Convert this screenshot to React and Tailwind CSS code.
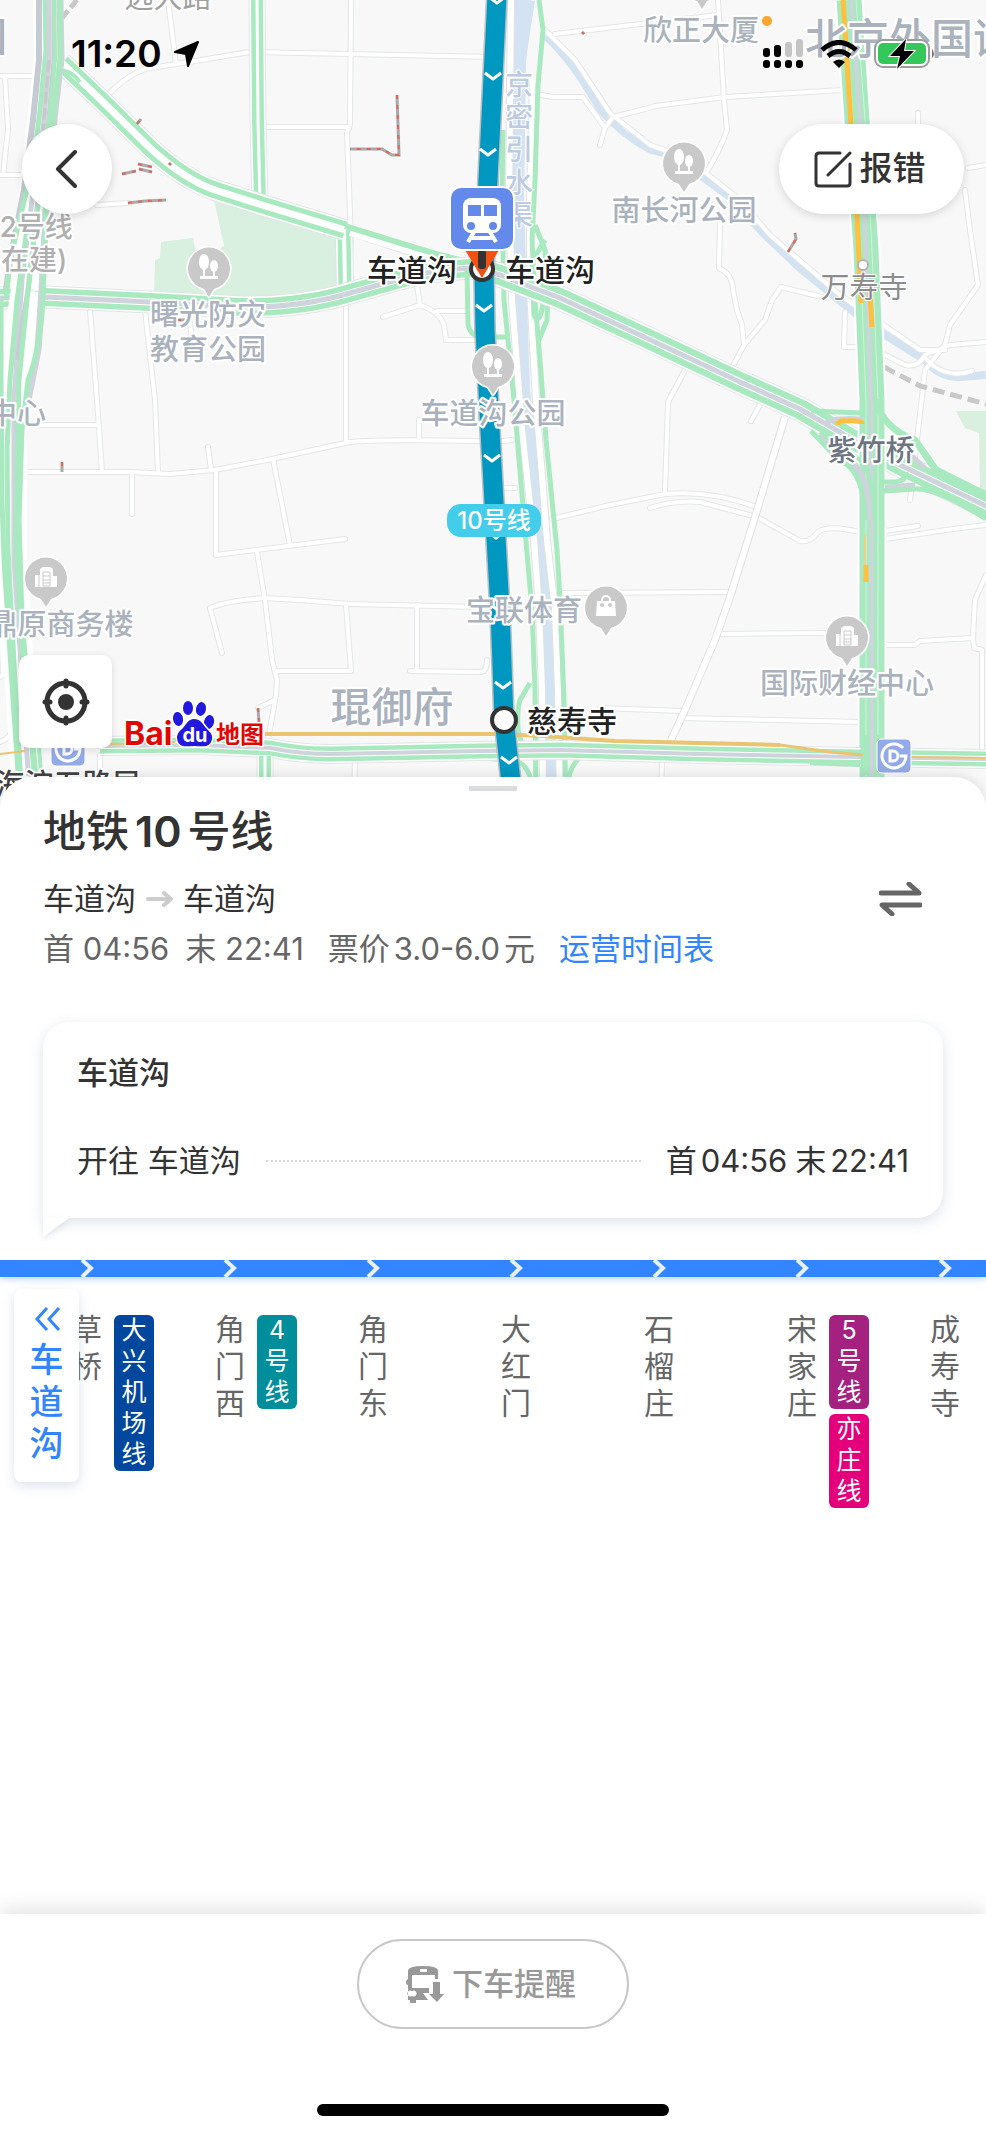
const minorRoads = [
  "M0,76 L37,76",
  "M5,76 L8,130 L3,175",
  "M0,175 L22,175",
  "M168,0 L176,64",
  "M107,96 Q125,76 145,69 L250,52 L493,57",
  "M351,0 L350,125 L347,133 L351,240 L346,300 L346,442",
  "M265,127 L349,127",
  "M97,205 L130,203",
  "M90,310 L97,400 L102,472",
  "M145,310 L155,400 L158,472",
  "M189,318 L193,345",
  "M383,317 L420,305 Q440,312 444,325 L446,340 L482,340",
  "M437,311 L465,311",
  "M417,285 L420,305",
  "M40,425 L99,425",
  "M24,472 L130,472 L170,474 L215,470 L272,459 L350,442 Q375,439 480,441",
  "M132,472 L132,514",
  "M208,447 L211,470",
  "M216,470 L216,555 L345,539",
  "M273,459 L290,545",
  "M419,420 L419,440",
  "M257,552 L265,600 L272,660 L277,680 L276,695 L265,757",
  "M258,708 L275,700",
  "M222,653 L210,608 Q225,601 264,598 L300,600 L350,604 L480,607",
  "M346,605 L351,671 L277,671",
  "M417,605 L417,671",
  "M410,671 L480,672 Q487,672 487,660",
  "M354,800 L355,760 L480,757",
  "M100,800 L100,755",
  "M0,742 Q10,738 12,730",
  "M2,640 L3,675 L0,677",
  "M555,34 L718,15",
  "M718,0 L724,100 L727,130 Q720,150 706,173",
  "M541,95 L553,97 L583,97 L605,128 L613,117 L645,109 L655,106 L725,97 L843,90",
  "M605,128 L600,145",
  "M545,30 L575,60 L610,113 L650,145 L670,152",
  "M706,173 L740,200 L770,235 L840,295 L920,350 L945,350",
  "M720,222 L719,268 Q733,275 733,290 L737,310 L742,325 L744,345 L731,370",
  "M744,345 L765,320 L772,300 L781,287 L822,297",
  "M845,312 L844,347 L870,347 L905,365 Q918,368 925,355 L950,345 L986,342",
  "M925,358 Q945,380 972,371",
  "M965,190 L970,230 L978,285 L950,325 L945,345 L925,370 L910,500",
  "M968,168 L986,165",
  "M918,113 L918,140",
  "M685,370 L668,402 L665,492",
  "M552,519 L610,505 L665,494 Q710,490 757,507",
  "M650,508 Q675,500 700,502 L757,517 L800,541 Q810,543 818,532 Q830,524 863,533",
  "M751,421 L760,405",
  "M563,593 L733,592",
  "M718,634 L830,633",
  "M600,708 L683,711",
  "M680,718 L860,722",
  "M885,539 L960,528 L986,525",
  "M885,531 L918,526",
  "M885,645 L915,645 L920,641 L973,638 L975,600 L986,575",
  "M973,638 L974,648 L982,650 L982,750",
  "M662,757 L661,800",
  "M503,441 L512,440",
  "M503,488 L515,488",
];

const wideRoads = [
  "M785,417 L755,517 L730,597 L715,640 L685,710 L671,740",
  "M511,0 L509,200 L512,300 L522,430 L534,540 L539,610 L542,690 L543,800",
  "M533,80 L530,200 L530,290 L536,400 L547,540 L555,610 L558,690 L560,800",
];

const northWest = "M62,63 L100,99 L150,148 Q185,180 215,190 L262,205 L345,230";
const westEast = "M-5,298 L45,297 L150,302 L240,307 Q300,308 350,293 L400,279 Q430,270 470,268 L482,270";
const southEast = "M482,270 L500,275 L560,298 L640,335 L740,382 L800,409 L850,438 L900,465 L990,508";
const bottomRoad = "M100,746 L200,745 L270,748 Q300,754 330,754 L480,751 L560,750 L700,754 L860,757 L990,759";

const leftLines = [
  { d: "M39,0 L39,60 L33,120 L24,190 L10,260 L6,290", color: "#c6cad3", width: 6 },
  { d: "M45,0 L46,50 L40,110 L34,160 L22,210 L10,260 L6,300", color: "#a9e9c0", width: 5 },
  { d: "M49,0 L49,60 L43,130 L32,200 L22,280 L14,400 L14,560 L30,800", color: "#cfd3db", width: 5 },
  { d: "M54,0 L54,60 L48,130 L38,200 L28,290 L17,360", color: "#c9ccd4", width: 5 },
  { d: "M54,0 L55,60 L49,120 L39,190", color: "#a9e9c0", width: 4 },
  { d: "M60,0 L61,60 L55,110 L47,190 L42,290 L38,350 L28,400", color: "#cfd3db", width: 7 },
  { d: "M60,0 L60,60 L53,120 L46,200 L43,300 Q40,350 28,380 L22,430 L19,520 L22,620 L38,800", color: "#a9e9c0", width: 5 },
  { d: "M29,215 L17,300 L10,380 L7,450 L8,550 L16,700 L22,800", color: "#a9e9c0", width: 5 },
  { d: "M38,205 L27,300 L19,380 L18,430 L16,540 L24,680 L38,800", color: "#a9e9c0", width: 5 },
  { d: "M1,300 L1,380 L2,500 L4,560 L13,700 L20,800", color: "#a9e9c0", width: 5 },
];

const congestion = [
  "M397,95 L399,155 L392,155 L382,149 L350,149",
  "M137,124 L141,119",
  "M122,174 L136,171",
  "M138,164 L152,167 M139,169 L152,172",
  "M128,203 L145,201 L166,200",
  "M177,320 L185,320",
  "M223,317 L225,322",
  "M62,462 L62,472",
  "M258,708 L259,723",
  "M582,32 L584,34",
  "M788,252 L796,239 L795,233",
  "M169,163 L171,165",
];

const chevrons = [
  [497, 0], [493, 76], [488, 152], [484, 308], [492, 458], [496, 535], [499, 608], [503, 685], [509, 760],
];

function MapLabel({ x, y, size = 29, color = "#aab2be", weight = 500, halo = 4, children }) {
  return (
    <text
      x={x}
      y={y + Math.round(size * 0.36)}
      textAnchor="middle"
      fontSize={size}
      fontWeight={weight}
      fill={color}
      stroke="#ffffff"
      strokeWidth={halo}
      strokeLinejoin="round"
      paintOrder="stroke"
    >
      {children}
    </text>
  );
}

function Pin({ x, y, type }) {
  return (
    <g transform={`translate(${x} ${y})`}>
      <path
        d="M0,29 L-5,21 A21,21 0 1 1 5,21 Z"
        fill="#c9c9c9"
        stroke="#fff"
        strokeWidth="3"
        strokeLinejoin="round"
        paintOrder="stroke"
      />
      {type === "park" && (
        <g fill="#fff">
          <ellipse cx="-5" cy="-6" rx="5" ry="8" />
          <ellipse cx="5" cy="-2" rx="4" ry="6" />
          <path d="M-6,0 h2 v8 h8 v-6 h2 v6 h3 v3 h-18 v-3 h3 z" />
        </g>
      )}
      {type === "office" && (
        <g>
          <path d="M-11,9 V-3 h5 v-6 l3,-2 h7 l3,2 v7 h4 V9 z" fill="#fff" />
          <path d="M-3,-6 h7 v14 h-7 z M-3,-2 h7 M-3,2 h7 M-3,5 h7 M-7,-3 v12" fill="none" stroke="#c9c9c9" />
        </g>
      )}
      {type === "shop" && (
        <g>
          <path d="M-4,-4 v-3 a4,4 0 0 1 8,0 v3" fill="none" stroke="#fff" strokeWidth="2" />
          <path d="M-9,-6 H9 L10,9 H-10 Z" fill="#fff" />
          <circle cx="-4" cy="-2" r="2" fill="#c9c9c9" />
          <circle cx="4" cy="-2" r="2" fill="#c9c9c9" />
        </g>
      )}
    </g>
  );
}

function MetroBadge({ x, y }) {
  return (
    <g transform={`translate(${x} ${y})`}>
      <rect x="-17" y="-17" width="34" height="34" rx="5" fill="#93aae8" stroke="#fff" strokeWidth="1" />
      <path d="M9,-8 A12,12 0 1 0 12,0 H6" fill="none" stroke="#fff" strokeWidth="3" />
      <path d="M-4,-5 h3 a5,5 0 0 1 0,10 h-3 z" fill="none" stroke="#fff" strokeWidth="3" />
    </g>
  );
}

function DoubleRoad({ d, width, inner, center = "#ffffff" }) {
  return (
    <g fill="none" strokeLinejoin="round">
      <path d={d} stroke="#e3e5e6" strokeWidth={width + 5} />
      <path d={d} stroke="#ffffff" strokeWidth={width + 3} />
      <path d={d} stroke="#a9e9c0" strokeWidth={width} />
      <path d={d} stroke="#ffffff" strokeWidth={inner} />
      <path d={d} stroke={center} strokeWidth={inner - 2} />
    </g>
  );
}

function MapCanvas() {
  return (
    <svg
      className="absolute inset-0 w-full h-full"
      viewBox="0 0 986 809"
      preserveAspectRatio="xMidYMin slice"
      role="img"
      aria-label="地图"
    >
      <rect width="986" height="809" fill="#f8f8f8" />

      {/* parks */}
      <path d="M213,195 L350,235 L346,290 L300,300 L154,298 L155,260 L160,258 L161,242 L193,238 L197,262 L224,246 Z" fill="#d9efdf" />
      <path d="M956,411 L986,411 V500 L980,490 L979,433 L965,428 Z" fill="#d9efdf" />

      {/* water */}
      <g fill="none" stroke="#d3e3f2">
        <path d="M528,0 L523,32 L519,60" strokeWidth="14" />
        <path d="M521,0 L520,60 L518,200 L521,300 L524,390 L534,460 L543,540 L547,610 L549,700 L550,809" strokeWidth="12" />
        <path d="M545,36 Q572,60 600,110 Q622,135 650,150 L670,155" strokeWidth="7" />
        <path d="M700,175 L730,197 L765,235 L800,268 L855,313 L885,335 L925,360 Q940,378 960,377 L986,375" strokeWidth="8" />
      </g>

      {/* streets */}
      <g fill="none" stroke="#e4e6e7" strokeWidth="6" strokeLinecap="round" strokeLinejoin="round">
        {minorRoads.map((d) => <path key={d} d={d} />)}
      </g>
      <g fill="none" stroke="#ffffff" strokeWidth="4" strokeLinecap="round" strokeLinejoin="round">
        {minorRoads.map((d) => <path key={d} d={d} />)}
      </g>
      <g fill="none" strokeLinejoin="round">
        {wideRoads.map((d) => <path key={d} d={d} stroke="#dfe1e3" strokeWidth="8" />)}
        {wideRoads.map((d) => <path key={d} d={d} stroke="#ffffff" strokeWidth="6" />)}
      </g>
      <path d="M77,0 L62,18" stroke="#c8c8c8" strokeWidth="5" strokeDasharray="10 4" />
      <path d="M884,367 L920,386 L986,404" fill="none" stroke="#c8c8c8" strokeWidth="5" strokeDasharray="12 6" />

      {/* arterial roads */}
      <DoubleRoad d="M257,0 L258,120 L260,203" width={12} inner={3} />
      <DoubleRoad d="M344,230 L345,290" width={13} inner={4} />
      <path d="M350,232 L440,262 L470,262" fill="none" stroke="#e3e5e6" strokeWidth="8" />
      <path d="M350,233 L440,261" fill="none" stroke="#fff" strokeWidth="6" />
      <DoubleRoad d={northWest} width={17} inner={7} />
      <path d="M345,226 L400,243 L440,255 L475,264" fill="none" stroke="#a9e9c0" strokeWidth="6" />
      <DoubleRoad d={westEast} width={18} inner={7} center="#cfd3dc" />
      <path d="M58,72 Q68,67 80,82" fill="none" stroke="#a9e9c0" strokeWidth="4" />

      <g fill="none" strokeLinejoin="round">
        <path d="M48,0 L49,60 L42,120 L34,190 L26,290" stroke="#ffffff" strokeWidth="30" />
        <path d="M26,290 L17,350 L12,400 L12,560 L28,809" stroke="#ffffff" strokeWidth="30" />
        {leftLines.map((l) => <path key={l.d} d={l.d} stroke={l.color} strokeWidth={l.width} />)}
        <path d="M49,60 L43,130" stroke="#c9c9c9" strokeWidth="3" strokeDasharray="12 4" />
        <path d="M8,320 L5,350 M33,318 L28,355" stroke="#ffffff" strokeWidth="3" />
      </g>

      {/* canal roads */}
      <g fill="none" stroke="#a9e9c0" strokeWidth="5" strokeLinejoin="round">
        <path d="M503,130 L502,200 L504,300 L514,400 L525,530 L532,610 L535,690 L536,809" />
        <path d="M539,0 L543,30 L538,85 L535,180 L532,240 L535,300 L540,360 L546,440 L557,550 L560,600 L564,700 L566,809" />
        <path d="M535,225 L545,250 L548,290 L547,320 L539,340" />
        <path d="M532,260 L534,315 Q538,325 542,310 L545,285" />
        <path d="M545,240 L534,258" />
        <path d="M467,270 L468,325 Q470,333 476,336" />
        <path d="M494,337 L508,337" />
        <path d="M530,683 L520,700 Q517,708 518,730 L522,745" />
        <path d="M480,758 L515,760 Q530,765 533,790 M580,757 Q568,768 567,790" />
      </g>
      <DoubleRoad d={southEast} width={20} inner={7} center="#cfd3dc" />

      {/* ring road */}
      <g fill="none" strokeLinejoin="round">
        <path d="M849,0 L857,120 L866,250 L872,400 L872,809" stroke="#ffffff" strokeWidth="29" />
        <path d="M849,0 L857,120 L866,250 L872,400 L872,809" stroke="#a9e9c0" strokeWidth="25" />
        <path d="M851,0 L860,120 L866,250 L871,400 L872,809" stroke="#cfd3dc" strokeWidth="4" />
        <path d="M844,0 L853,120 L860,250 L866,400 L866,809" stroke="#cdf2da" strokeWidth="1" />
        <path d="M856,0 L865,120 L872,250 L878,400 L878,809" stroke="#cdf2da" strokeWidth="1" />
        <path d="M843,0 L851,124 L857,215 L861,303" stroke="#ffbf3f" strokeWidth="5" />
        <path d="M870,294 L872,327 M866,565 L866,582" stroke="#ffbf3f" strokeWidth="5" />
        <path d="M865,535 L865,565" stroke="#f4cf85" strokeWidth="2" />
      </g>
      <g fill="none" strokeLinejoin="round">
        <path d="M820,434 L845,458 Q868,470 869,520" stroke="#cfd3dc" strokeWidth="8" />
        <path d="M811,431 L840,461 Q864,470 865,520" stroke="#a9e9c0" strokeWidth="5" />
        <path d="M820,432 L860,460 Q874,475 874,520" stroke="#a9e9c0" strokeWidth="4" />
        <path d="M811,411 L862,413" stroke="#a9e9c0" strokeWidth="5" />
        <path d="M825,424 Q832,417 862,419" stroke="#cfd3dc" strokeWidth="5" />
        <path d="M875,400 Q885,430 915,440 L936,470 L986,495" stroke="#a9e9c0" strokeWidth="7" />
        <path d="M895,440 L925,468" stroke="#cfd3dc" strokeWidth="5" />
        <path d="M885,487 L915,485" stroke="#cfd3dc" strokeWidth="5" />
        <path d="M884,482 L896,482 Q907,480 906,472 M884,491 L915,489 Q935,487 986,519" stroke="#a9e9c0" strokeWidth="5" />
        <path d="M838,425 Q838,420 846,421 Q862,420 862,424" stroke="#ffbf3f" strokeWidth="5" />
      </g>

      {/* bottom road and rail */}
      <DoubleRoad d={bottomRoad} width={15} inner={6} center="#cfd3dc" />
      <path d="M810,763 L860,765" stroke="#a9e9c0" strokeWidth="4" />
      <path d="M872,735 L872,775" stroke="#a9e9c0" strokeWidth="23" />
      <path d="M872,720 L872,809" stroke="#cfd3dc" strokeWidth="4" />
      <g fill="none" stroke="#e9c571">
        <path d="M265,734 L493,734 L543,736 L615,741 L780,745" strokeWidth="4" />
        <path d="M780,745 L830,752 L863,755" strokeWidth="3" />
        <path d="M910,757 L986,758 M0,754 L25,751 M110,744 L175,742" strokeWidth="2" />
      </g>
      <DoubleRoad d="M265,756 L265,809" width={12} inner={3} />
      <path d="M32,748 L35,809 M39,748 L41,775" stroke="#a9e9c0" strokeWidth="4" />

      {/* closed segments */}
      <g fill="none" strokeWidth="3">
        {congestion.map((d) => <path key={d} d={d} stroke="#a9a9a9" />)}
        {congestion.map((d) => <path key={d} d={d} stroke="#e0655b" strokeWidth="2" strokeDasharray="4 6" />)}
      </g>

      <g fill="#bccbe1" fontSize="28" fontWeight="500" textAnchor="middle" stroke="#ffffff" strokeWidth="2" paintOrder="stroke">
        <text x="519" y="95">京</text>
        <text x="519" y="127">密</text>
        <text x="519" y="160">引</text>
        <text x="519" y="193">水</text>
        <text x="519" y="225">渠</text>
      </g>

      {/* line 10 */}
      <g fill="none" strokeLinejoin="round">
        <path d="M497,-5 L488,180 L484,270 L485,330 L490,430 L500,610 L504,719 L514,809" stroke="#b9bfc3" strokeWidth="22" />
        <path d="M497,-5 L488,180 L484,270 L485,330 L490,430 L500,610 L504,719 L514,809" stroke="#0098c1" strokeWidth="19" />
        {chevrons.map(([x, y]) => (
          <path key={y} d={`M${x - 8},${y - 3} L${x},${y + 3} L${x + 8},${y - 3}`} stroke="#ffffff" strokeWidth="3" />
        ))}
      </g>

      <MapLabel x={168} y={-2} color="#a0a0a0" weight={400}>远大路</MapLabel>
      <MapLabel x={-13} y={37} size={40}>园</MapLabel>
      <MapLabel x={701} y={31}>欣正大厦</MapLabel>
      <MapLabel x={910} y={39} size={42}>北京外国语</MapLabel>
      <MapLabel x={684} y={211}>南长河公园</MapLabel>
      <MapLabel x={208} y={315}>曙光防灾</MapLabel>
      <MapLabel x={208} y={350}>教育公园</MapLabel>
      <MapLabel x={36} y={227} size={28} color="#b0b0b0">2号线</MapLabel>
      <MapLabel x={29} y={260} size={28} color="#b0b0b0">(在建)</MapLabel>
      <MapLabel x={493} y={414}>车道沟公园</MapLabel>
      <MapLabel x={17} y={414}>中心</MapLabel>
      <MapLabel x={61} y={625}>鼎原商务楼</MapLabel>
      <MapLabel x={524} y={611}>宝联体育</MapLabel>
      <MapLabel x={847} y={684}>国际财经中心</MapLabel>
      <MapLabel x={392} y={707} size={41}>琨御府</MapLabel>
      <MapLabel x={864} y={288} color="#8c8c8c" weight={400} halo={2}>万寿寺</MapLabel>
      <MapLabel x={871} y={451} color="#6d7583">紫竹桥</MapLabel>
      <MapLabel x={68} y={785} color="#444444">海淀五路居</MapLabel>

      <Pin x={702} y={-20} type="office" />
      <Pin x={209} y={268} type="park" />
      <Pin x={684} y={163} type="park" />
      <Pin x={493} y={366} type="park" />
      <Pin x={46} y={578} type="office" />
      <Pin x={847} y={637} type="office" />
      <Pin x={606} y={607} type="shop" />
      <MetroBadge x={68} y={749} />
      <MetroBadge x={894} y={756} />
      <circle cx="863" cy="265" r="5" fill="#fff" stroke="#b5b5b5" strokeWidth="2" />

      {/* line name */}
      <rect x="447" y="504" width="94" height="33" rx="14" fill="#43cdeb" />
      <text x="494" y="529" textAnchor="middle" fontSize="24" fontWeight="500" fill="#fff">10号线</text>

      {/* stations */}
      <circle cx="482" cy="269" r="11" fill="#fff" stroke="#333" strokeWidth="4" />
      <circle cx="504" cy="720" r="12" fill="#fff" stroke="#333" strokeWidth="4" />
      <path d="M465,250 H499 L482,278 Z" fill="#f4500f" />
      <rect x="478" y="250" width="8" height="19" rx="3" fill="#333" />
      <rect x="449" y="186" width="66" height="65" rx="13" fill="#fff" />
      <rect x="451" y="188" width="62" height="61" rx="10" fill="#6389ea" />
      <path d="M471,198 h22 a8,8 0 0 1 8,8 v19 a8,8 0 0 1 -8,8 h-22 a8,8 0 0 1 -8,-8 v-19 a8,8 0 0 1 8,-8 z" fill="#fff" />
      <path d="M468,205 h13 v11 h-13 z M484,205 h13 v11 h-13 z" fill="#6389ea" />
      <circle cx="471" cy="226" r="4" fill="#6389ea" />
      <circle cx="493" cy="226" r="4" fill="#6389ea" />
      <path d="M474,232 L468,242 M490,232 L496,242 M470,238 H494" fill="none" stroke="#fff" strokeWidth="4" />
      <MapLabel x={412} y={270} size={30} color="#222222">车道沟</MapLabel>
      <MapLabel x={550} y={270} size={30} color="#222222">车道沟</MapLabel>
      <MapLabel x={572} y={721} size={30} color="#222222">慈寿寺</MapLabel>
    </svg>
  );
}

function BaiduLogo() {
  return (
    <svg className="w-[142px] h-[50px]" viewBox="0 0 142 50" role="img" aria-label="Baidu 地图">
      <g stroke="#fff" strokeWidth="3" paintOrder="stroke" strokeLinejoin="round" fontWeight="700">
        <text x="0" y="47" fontSize="32" fill="#e10602">Bai</text>
        <g fill="#2319dc">
          <ellipse cx="54" cy="21" rx="5" ry="7" transform="rotate(-10 54 21)" />
          <ellipse cx="64" cy="10" rx="5" ry="7" />
          <ellipse cx="77" cy="11" rx="5" ry="7" transform="rotate(12 77 11)" />
          <ellipse cx="85" cy="24" rx="5" ry="7" transform="rotate(15 85 24)" />
          <path d="M70,21 C64,21 62,27 58,31 C53,35 52,39 54,44 C57,50 64,48 70,48 C77,48 84,50 87,44 C90,38 87,35 83,31 C79,27 77,21 70,21 Z" />
        </g>
        <text x="92" y="45" fontSize="24" fill="#e10602">地图</text>
      </g>
      <text x="71" y="44" textAnchor="middle" fontSize="20" fontWeight="700" fill="#fff">du</text>
    </svg>
  );
}

function StatusBar() {
  return (
    <div className="flex items-center justify-between pl-[71px] pr-[50px] pt-[32px] h-[76px] text-black">
      <div className="flex items-center gap-3">
        <span className="text-[37px] leading-[44px] font-semibold">11:20</span>
        <svg className="w-[26px] h-[26px]" viewBox="0 0 26 26" aria-hidden="true">
          <path d="M24,1 L14,25 L12,13 L1,11 Z" fill="currentColor" stroke="currentColor" strokeWidth="2" strokeLinejoin="round" />
        </svg>
      </div>
      <div className="flex items-center gap-4">
        <svg className="w-[42px] h-[30px]" viewBox="0 0 42 30" aria-hidden="true">
          <rect x="1" y="9" width="7" height="9" rx="3" />
          <rect x="12" y="6" width="7" height="12" rx="3" />
          <rect x="23" y="3" width="7" height="15" rx="3" fill="#c4c4c4" />
          <rect x="34" y="0" width="7" height="18" rx="3" fill="#c4c4c4" />
          <rect x="1" y="21" width="7" height="8" rx="3" />
          <rect x="12" y="21" width="7" height="8" rx="3" />
          <rect x="23" y="21" width="7" height="8" rx="3" />
          <rect x="34" y="21" width="7" height="8" rx="3" />
        </svg>
        <svg className="w-[38px] h-[28px]" viewBox="0 0 38 28" fill="none" stroke="currentColor" strokeWidth="5" aria-hidden="true">
          <path d="M2,10 Q19,-5 36,10" />
          <path d="M8,16 Q19,7 30,16" />
          <path d="M19,28 L13,22 Q19,17 25,22 Z" fill="currentColor" stroke="none" />
        </svg>
        <svg className="w-[62px] h-[30px]" viewBox="0 0 62 30" aria-hidden="true">
          <rect x="1" y="1" width="54" height="27" rx="8" fill="#fff" stroke="#9c9c9c" strokeWidth="2" />
          <path d="M58,10 q4,5 0,9 z" fill="#777" />
          <rect x="4" y="4" width="48" height="21" rx="5" fill="#34c759" />
          <path d="M32,0 L16,17 H26 L23,30 L40,12 H30 Z" fill="#000" stroke="#fff" strokeWidth="2" paintOrder="stroke" />
        </svg>
      </div>
    </div>
  );
}

function MapSection() {
  return (
    <section className="relative h-[809px] overflow-hidden">
      <MapCanvas />
      <span className="absolute right-[214px] top-4 w-[10px] h-[10px] rounded-full bg-[#fba531]" />
      <div className="relative h-full flex flex-col">
        <StatusBar />
        <div className="mt-12 px-[22px] flex items-center justify-between">
          <button type="button" aria-label="返回" className="w-[90px] h-[90px] pr-[2px] rounded-full bg-white shadow-[0_2px_10px_rgba(0,0,0,0.15)] flex items-center justify-center">
            <svg className="w-[22px] h-[38px]" viewBox="0 0 22 38" fill="none" stroke="#333" strokeWidth="4" strokeLinecap="round" strokeLinejoin="round">
              <path d="M20,2 L3,19 L20,36" />
            </svg>
          </button>
          <button type="button" className="w-[185px] h-[90px] pr-1 rounded-full bg-white shadow-[0_2px_10px_rgba(0,0,0,0.15)] flex items-center justify-center gap-2 text-[33px] font-medium text-[#333]">
            <svg className="w-[38px] h-[38px]" viewBox="0 0 38 38" fill="none" stroke="currentColor" strokeWidth="3" strokeLinecap="round" strokeLinejoin="round">
              <path d="M26,3 H5 Q2,3 2,6 V33 Q2,36 5,36 H33 Q36,36 36,33 V14" />
              <path d="M36,3 L14,25" />
            </svg>
            报错
          </button>
        </div>
        <div className="mt-auto pl-[19px] pb-[61px] flex items-end gap-3">
          <button type="button" aria-label="定位" className="w-[93px] h-[93px] rounded-[10px] bg-white shadow-[0_2px_8px_rgba(0,0,0,0.12)] flex items-center justify-center">
            <svg className="w-[48px] h-[48px]" viewBox="0 0 48 48" fill="none" stroke="#333" strokeWidth="5" strokeLinecap="round">
              <circle cx="24" cy="24" r="19" />
              <circle cx="24" cy="24" r="8" fill="#333" stroke="none" />
              <path d="M24,3 V8 M24,40 V45 M3,24 H8 M40,24 H45" />
            </svg>
          </button>
          <BaiduLogo />
        </div>
      </div>
    </section>
  );
}

function LineHeader() {
  return (
    <header className="px-[43px] pt-[10px]">
      <h1 className="flex items-center gap-[6px] text-[43px] leading-[60px] font-medium text-[#333]">
        地铁<span className="font-semibold">10</span>号线
      </h1>
      <div className="mt-[15px] flex items-center justify-between pr-[21px]">
        <p className="flex items-center gap-[10px] text-[31px] leading-[46px] text-[#333]">
          车道沟
          <svg className="w-[27px] h-[16px]" viewBox="0 0 27 16" fill="none" stroke="#ccc" strokeWidth="4" strokeLinecap="round" strokeLinejoin="round" aria-hidden="true">
            <path d="M2,8 H24 M18,2 L25,8 L18,14" />
          </svg>
          车道沟
        </p>
        <button type="button" aria-label="换向">
          <svg className="w-[43px] h-[34px]" viewBox="0 0 43 34" fill="none" stroke="#666" strokeWidth="5" strokeLinecap="round" strokeLinejoin="round">
            <path d="M2,11 H40 L30,2" />
            <path d="M41,23 H3 L13,32" />
          </svg>
        </button>
      </div>
      <div className="mt-1 flex items-center text-[31px] leading-[46px] text-[#666] whitespace-nowrap">
        <span>首 04:56</span>
        <span className="ml-4">末 22:41</span>
        <span className="ml-6 flex gap-1">票价<span>3.0-6.0</span>元</span>
        <a href="#timetable" className="ml-6 text-[#3385ff]">运营时间表</a>
      </div>
    </header>
  );
}

function TimeCard() {
  return (
    <section className="relative mx-[43px] mt-[50px] pt-[28px] pb-[34px] px-[34px] rounded-[26px] rounded-bl-none bg-white text-[31px] leading-[46px] text-[#333] shadow-[0_4px_14px_rgba(60,100,150,0.18)]">
      <h2 className="font-medium">车道沟</h2>
      <div className="mt-[42px] flex items-center justify-between">
        <span>开往 车道沟</span>
        <span className="flex-1 mx-[25px] border-t-2 border-dotted border-[#d8d8d8]" />
        <span className="flex gap-1">
          首<span>04:56</span>
          <span className="ml-1">末</span>
          <span>22:41</span>
        </span>
      </div>
      <svg className="absolute left-0 top-full w-[26px] h-[19px] drop-shadow-[0_3px_3px_rgba(60,100,150,0.15)]" viewBox="0 0 26 19" aria-hidden="true">
        <path d="M0,0 H26 L0,19 Z" fill="#fff" />
      </svg>
    </section>
  );
}

const stations = [
  { name: "草桥", lines: [{ label: "大兴机场线", bg: "bg-[#00479d]" }] },
  { name: "角门西", lines: [{ label: "4号线", bg: "bg-[#008e9c]" }] },
  { name: "角门东", lines: [] },
  { name: "大红门", lines: [] },
  { name: "石榴庄", lines: [] },
  { name: "宋家庄", lines: [{ label: "5号线", bg: "bg-[#a4217f]" }, { label: "亦庄线", bg: "bg-[#e5007b]" }] },
  { name: "成寿寺", lines: [] },
];

function StationStrip() {
  return (
    <section className="relative flex-1 mt-[42px] overflow-hidden">
      <div className="h-[17px] pl-[80px] flex overflow-hidden bg-[#3385ff] shadow-[0_2px_6px_rgba(51,133,255,0.35)]">
        {stations.map((s) => (
          <span key={s.name} className="w-[143px] shrink-0">
            <svg className="w-[15px] h-[17px]" viewBox="0 0 15 17" fill="none" stroke="#e8f1ff" strokeWidth="4" aria-hidden="true">
              <path d="M2,0 L11,8 L2,17" />
            </svg>
          </span>
        ))}
      </div>
      <ol className="flex pl-[72px] pt-[34px]">
        {stations.map((s) => (
          <li key={s.name} className="w-[143px] shrink-0 flex items-start gap-3">
            <span className="w-[30px] text-[30px] leading-[37px] text-center break-all text-[#666]">{s.name}</span>
            <span className="mt-1 flex flex-col gap-[5px]">
              {s.lines.map((l) => (
                <span key={l.label} className={`w-10 px-[7px] pb-px rounded-md text-center text-[25px] leading-[31px] break-all text-white ${l.bg}`}>
                  {l.label}
                </span>
              ))}
            </span>
          </li>
        ))}
      </ol>
      <button type="button" className="absolute left-[14px] top-[29px] w-[65px] h-[193px] rounded-lg bg-white shadow-[0_4px_12px_rgba(60,100,150,0.18)] flex flex-col items-center gap-2 pt-[18px] text-[34px] leading-[42px] font-medium text-[#3385ff]">
        <svg className="w-[26px] h-[24px] shrink-0" viewBox="0 0 26 24" fill="none" stroke="currentColor" strokeWidth="3" aria-hidden="true">
          <path d="M13,1 L3,12 L13,23 M25,1 L15,12 L25,23" />
        </svg>
        <span className="w-[34px] break-all">车道沟</span>
      </button>
    </section>
  );
}

function BottomBar() {
  return (
    <footer className="relative bg-white shadow-[0_-4px_20px_rgba(0,0,0,0.12)] flex flex-col items-center pt-[25px] pb-[19px]">
      <button type="button" className="w-[272px] h-[90px] pr-1 rounded-full border-2 border-[#c8c8c8] flex items-center justify-center gap-2 text-[31px] font-medium text-[#999]">
        <svg className="w-[38px] h-[37px]" viewBox="0 0 38 37" fill="currentColor" aria-hidden="true">
          <path fillRule="evenodd" d="M2,5 Q2,0 17,0 Q32,0 32,5 V13 H29 V9 H6 V22 H23 V27 H17 L22,34 H10 V37 H4 V34 H2 V19 Q0,19 0,16 Q0,14 2,13 Z M14,3 V6 H21 V3 Z M6,25 A3,3 0 1 0 6,30 A3,3 0 1 0 6,25 Z" />
          <path d="M27,16 H34 V28 H38 L31,36 L23,28 H27 Z" />
        </svg>
        下车提醒
      </button>
      <span className="mt-[75px] w-[352px] h-[12px] rounded-full bg-black" />
    </footer>
  );
}

export default function App() {
  return (
    <main className="min-h-screen flex flex-col bg-white overflow-hidden font-['Inter','Noto_Sans_CJK_SC',sans-serif]" lang="zh-CN">
      <MapSection />
      <div className="relative -mt-8 flex-1 flex flex-col rounded-t-[32px] bg-white shadow-[0_-2px_12px_rgba(0,0,0,0.1)]">
        <span className="mt-[9px] self-center w-12 h-[5px] bg-[#dadddf]" />
        <LineHeader />
        <TimeCard />
        <StationStrip />
        <BottomBar />
      </div>
    </main>
  );
}
